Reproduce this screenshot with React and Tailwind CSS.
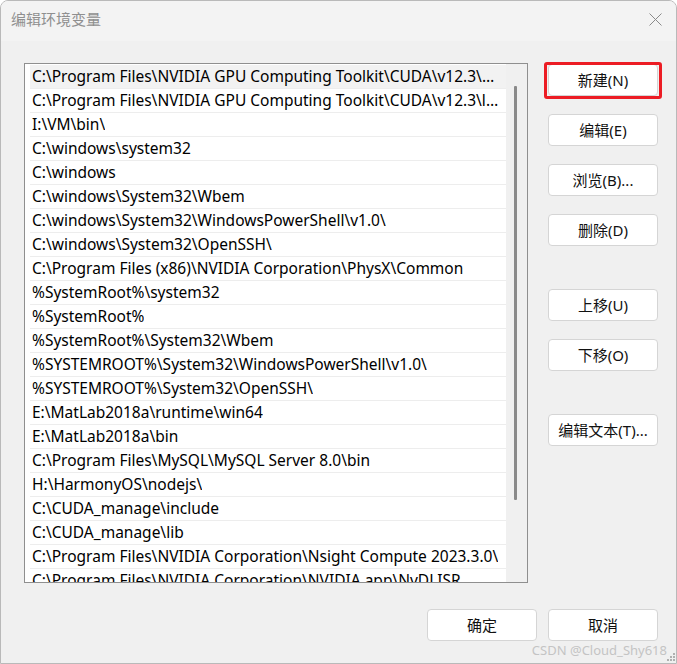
import React from 'react';

const paths = [
  'C:\\Program Files\\NVIDIA GPU Computing Toolkit\\CUDA\\v12.3\\bin',
  'C:\\Program Files\\NVIDIA GPU Computing Toolkit\\CUDA\\v12.3\\libnvvp',
  'I:\\VM\\bin\\',
  'C:\\windows\\system32',
  'C:\\windows',
  'C:\\windows\\System32\\Wbem',
  'C:\\windows\\System32\\WindowsPowerShell\\v1.0\\',
  'C:\\windows\\System32\\OpenSSH\\',
  'C:\\Program Files (x86)\\NVIDIA Corporation\\PhysX\\Common',
  '%SystemRoot%\\system32',
  '%SystemRoot%',
  '%SystemRoot%\\System32\\Wbem',
  '%SYSTEMROOT%\\System32\\WindowsPowerShell\\v1.0\\',
  '%SYSTEMROOT%\\System32\\OpenSSH\\',
  'E:\\MatLab2018a\\runtime\\win64',
  'E:\\MatLab2018a\\bin',
  'C:\\Program Files\\MySQL\\MySQL Server 8.0\\bin',
  'H:\\HarmonyOS\\nodejs\\',
  'C:\\CUDA_manage\\include',
  'C:\\CUDA_manage\\lib',
  'C:\\Program Files\\NVIDIA Corporation\\Nsight Compute 2023.3.0\\',
  'C:\\Program Files\\NVIDIA Corporation\\NVIDIA app\\NvDLISR',
];

const font = { fontFamily: '"Noto Sans", "Noto Sans CJK SC", sans-serif' };

const Btn = ({ children, className = '' }) => (
  <button
    type="button"
    className={`w-[110px] h-[32px] bg-white border border-[#d5d5d5] rounded-[4px] text-[15px] text-[#111] flex items-center justify-center leading-none ${className}`}
  >
    {children}
  </button>
);

const App = () => {
  return (
    <div style={font} className="w-[677px] h-[664px] bg-[#f0f0f0] border border-[#b9b9b9] rounded-t-[8px] flex flex-col overflow-hidden relative">
      {/* title bar */}
      <div className="h-[40px] bg-[#f3f3f3] flex items-start justify-between pl-[10px] pr-[14px] pt-[8px]">
        <span className="text-[15px] text-[#8f8f8f] leading-[20px]">编辑环境变量</span>
        <svg width="13" height="13" viewBox="0 0 13 13" className="mt-[4px]">
          <path d="M0.5 0.5 L12.5 12.5 M12.5 0.5 L0.5 12.5" stroke="#8a8a8a" strokeWidth="1" fill="none" />
        </svg>
      </div>

      <div className="flex-1 flex flex-col pl-[23px] pr-[18px] pt-[22px]">
        <div className="flex">
          {/* path list */}
          <div className="w-[504px] h-[520px] border border-[#8f8f8f] bg-white flex">
            <div className="flex-1 pl-[5px] pt-[1px] overflow-hidden flex flex-col">
              {paths.map((p, i) => (
                <div
                  key={i}
                  className={`h-[24px] shrink-0 border-b border-[#ededed] pl-[2px] pr-[6px] pt-[1px] flex items-center text-[15.5px] text-black whitespace-nowrap overflow-hidden ${i === 0 ? 'bg-[#f2f2f2]' : ''}`}
                >
                  <span className="truncate">{p}</span>
                </div>
              ))}
            </div>
            <div className="w-[21px] bg-[#f0f0f0] pt-[22px] pl-[8px]">
              <div className="w-[3px] h-[414px] bg-[#8a8a8a] rounded-[1px]" />
            </div>
          </div>

          {/* side buttons */}
          <div className="ml-[20px] pt-[1px] flex flex-col">
            <div className="relative">
              <Btn>新建(N)</Btn>
              <div className="absolute -left-[4px] -right-[4px] -top-[2px] -bottom-[3px] border-[3px] border-[#ec1c24] rounded-[3px]" />
            </div>
            <Btn className="mt-[18px]">编辑(E)</Btn>
            <Btn className="mt-[18px]">浏览(B)...</Btn>
            <Btn className="mt-[18px]">删除(D)</Btn>
            <Btn className="mt-[43px]">上移(U)</Btn>
            <Btn className="mt-[18px]">下移(O)</Btn>
            <Btn className="mt-[43px]">编辑文本(T)...</Btn>
          </div>
        </div>

        {/* bottom buttons */}
        <div className="mt-[26px] flex justify-end gap-[11px]">
          <Btn>确定</Btn>
          <Btn>取消</Btn>
        </div>
      </div>

      {/* watermark + grip */}
      <div className="absolute right-[9px] bottom-[6px] text-[13px] leading-none text-[#c4c4c4]">CSDN @Cloud_Shy618</div>
      <svg width="9" height="9" viewBox="0 0 9 9" className="absolute right-[1px] bottom-[2px]">
        {[[7, 1], [4, 4], [7, 4], [1, 7], [4, 7], [7, 7]].map(([x, y], i) => (
          <rect key={i} x={x} y={y} width="2" height="2" fill="#b0b0b0" />
        ))}
      </svg>
    </div>
  );
};

export default App;
